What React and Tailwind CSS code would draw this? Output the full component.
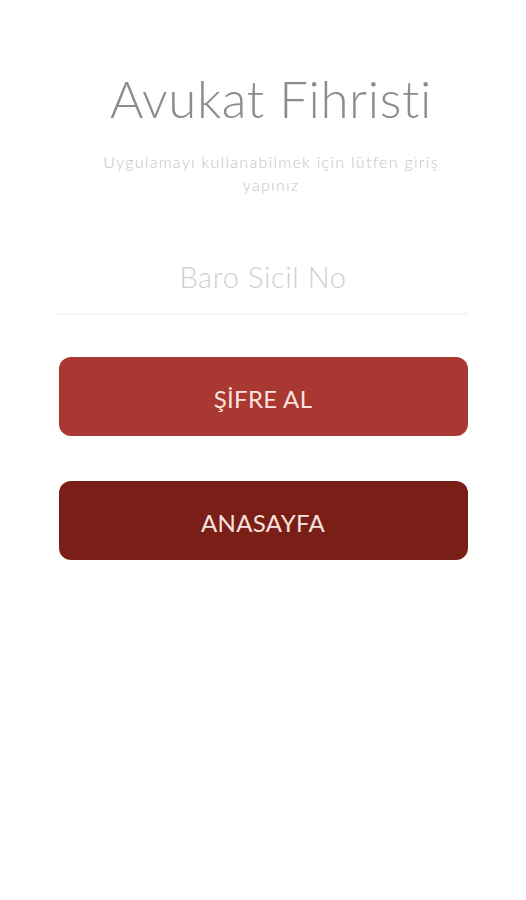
export default function App() {
  return (
    <div className="w-[526px] h-[900px] bg-white flex flex-col items-center" style={{ fontFamily: "Lato, 'Noto Sans', sans-serif" }}>
      <h1 className="mt-[68px] ml-[16px] text-[51px] leading-[62px] font-light text-[#8c8c8c] tracking-[0.6px]">Avukat Fihristi</h1>
      <p className="mt-[20px] ml-[16px] w-[380px] text-center text-[16px] leading-[23px] font-light text-[#c4c4c4] tracking-[1.3px]">
        Uygulamayı kullanabilmek için lütfen giriş<br />yapınız
      </p>
      <div className="mt-[61px] w-[410px] flex flex-col items-center">
        <div className="text-[29px] leading-[40px] font-light text-[#d0d0d0] tracking-[0.6px]">Baro Sicil No</div>
        <div className="mt-[16px] w-full h-[2px] bg-[#f6f6f6]"></div>
      </div>
      <button className="mt-[42px] w-[409px] h-[79px] pt-[4px] rounded-[12px] bg-[#a83831] text-[#f9e2de] text-[24px] tracking-[0.3px] flex items-center justify-center">
        ŞİFRE AL
      </button>
      <button className="mt-[45px] w-[409px] h-[79px] pt-[4px] rounded-[12px] bg-[#7a1f18] text-[#f9e2de] text-[24px] tracking-[0.3px] flex items-center justify-center">
        ANASAYFA
      </button>
    </div>
  );
}
